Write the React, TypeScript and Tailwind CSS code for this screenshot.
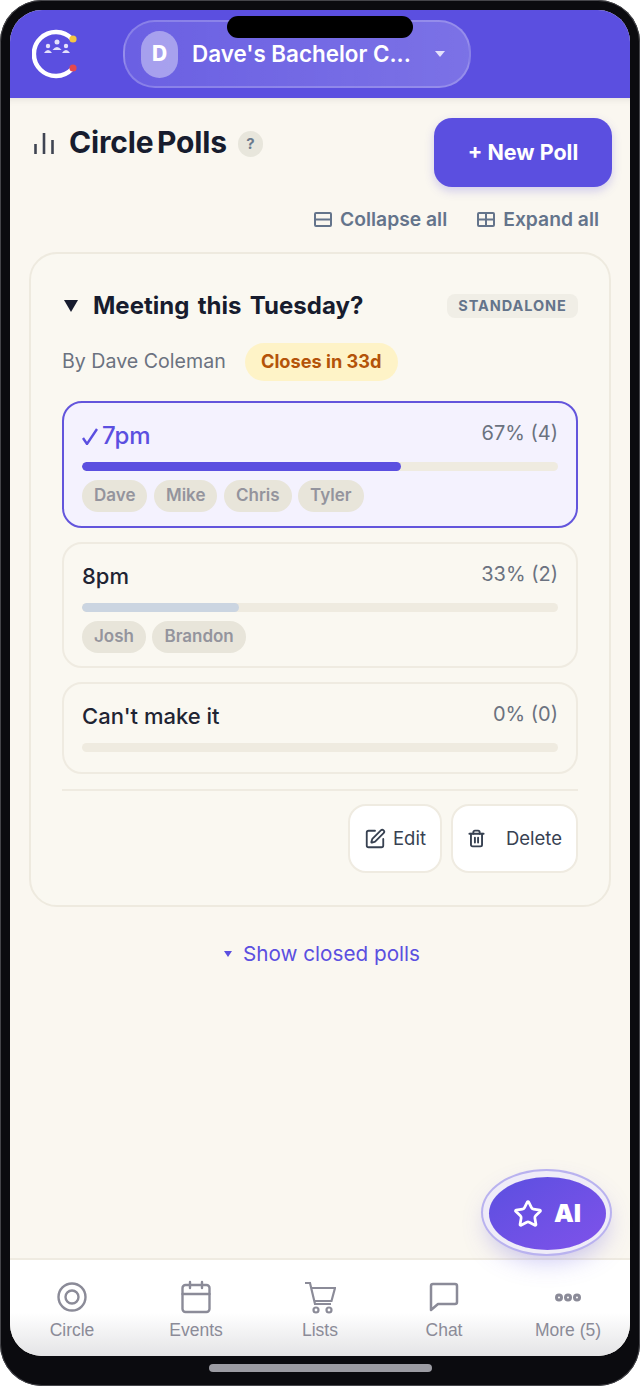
import { Calendar, SquarePen, Star, Trash2 } from 'lucide-react'

const inter = 'font-["Inter",sans-serif]'

function Logo() {
  return (
    <svg width="46" height="50" viewBox="0 0 46 50" className="shrink-0">
      <path d="M40 10 A22 22 0 1 0 40 40" fill="none" stroke="#fff" strokeWidth="4.5" strokeLinecap="round" />
      <circle cx="41" cy="10" r="3.6" fill="#f5c542" />
      <circle cx="41" cy="39" r="3.6" fill="#e5484d" />
      <g fill="#e4e1fb">
        <circle cx="16" cy="17" r="2.2" />
        <path d="M12 24 q4-6 8 0 z" />
        <circle cx="25" cy="13" r="2.500" />
        <path d="M20.500 21 q4.500-6 9 0 z" />
        <circle cx="34" cy="17" r="2.2" />
        <path d="M30 24 q4-6 8 0 z" />
      </g>
    </svg>
  )
}

function Chip({ name }: { name: string }) {
  return (
    <span className="flex h-[32px] items-center rounded-full bg-[#e8e5da] px-[12px] text-[17px] font-semibold text-[#94949d]">
      {name}
    </span>
  )
}

type OptionProps = {
  label: string
  stat: string
  pct: number
  voters?: string[]
  chosen?: boolean
  padBottom: string
}

function Option({ label, stat, pct, voters = [], chosen = false, padBottom }: OptionProps) {
  return (
    <div
      className={`rounded-[20px] border-2 px-[18px] pt-[15px] ${padBottom} ${
        chosen ? 'border-[#6355dc] bg-[#f4f2fe]' : 'border-[#efebe1] bg-[#faf8f1]'
      }`}
    >
      <div className="flex h-[36px] items-start justify-between">
        {chosen ? (
          <span className="flex items-center gap-[4px] text-[24px] leading-[36px] font-medium text-[#5b4fe0]">
            <svg width="16" height="17" viewBox="0 0 16 17" fill="none" stroke="#5b4fe0" strokeWidth="2.4">
              <path d="M1 10 L5 16 L15 1" />
            </svg>
            {label}
          </span>
        ) : (
          <span className="text-[22px] leading-[34px] font-medium text-[#1f2433]">{label}</span>
        )}
        <span className="text-[20px] leading-[30px] text-[#6b7280]">{stat}</span>
      </div>
      <div className="mt-[8px] h-[9px] overflow-hidden rounded-full bg-[#efebe0]">
        <div
          className={chosen ? 'h-full rounded-full bg-[#5b4fe0]' : 'h-full rounded-full bg-[#cbd5e1]'}
          style={{ width: `${pct}%` }}
        />
      </div>
      {voters.length > 0 && (
        <div className="mt-[9px] flex gap-[6.5px]">
          {voters.map((v) => (
            <Chip key={v} name={v} />
          ))}
        </div>
      )}
    </div>
  )
}

function NavItem({ icon, label }: { icon: React.ReactNode; label: string }) {
  return (
    <div className="flex flex-col items-center">
      <div className="flex h-[40px] w-[40px] items-center justify-center">{icon}</div>
      <span className='mt-[2px] font-["Liberation_Sans",sans-serif] text-[17.5px] leading-[22px] text-[#8b8b98]'>{label}</span>
    </div>
  )
}

export default function App() {
  return (
    <div className={`h-[1386px] w-[640px] overflow-hidden bg-white ${inter}`}>
      <div className="relative flex h-full flex-col rounded-[42px] bg-[#0b0b0f] px-[10px] pt-[10px] shadow-[inset_0_0_0_1px_#45454a]">
        {/* notch */}
        <div className="absolute top-[16px] left-[227px] z-20 h-[22px] w-[186px] rounded-full bg-black" />

        <div className="flex h-[1346px] flex-col overflow-hidden rounded-[32px] bg-[#faf7f0]">
          {/* header */}
          <header className="flex h-[88px] shrink-0 items-center bg-[#5b4fe0] pl-[22px]">
            <Logo />
            <div className="ml-[45px] flex h-[68px] w-[348px] items-center rounded-[32px] border-2 border-white/20 bg-gradient-to-r from-white/10 to-white/20 pl-[16px]">
              <div className="flex h-[47px] w-[37px] items-center justify-center rounded-full bg-white/40 text-[21px] font-extrabold text-white">
                D
              </div>
              <span className="ml-[14px] w-[222px] text-[22.4px] font-semibold whitespace-nowrap text-white">
                Dave's Bachelor C...
              </span>
              <svg width="10" height="6" viewBox="0 0 10 6" className="ml-[21px]">
                <path d="M0 0 H10 L5 6 Z" fill="#e4e1fb" />
              </svg>
            </div>
          </header>

          {/* content */}
          <main className="flex min-h-0 flex-1 flex-col px-[19px] shadow-[inset_0_8px_8px_-8px_rgba(0,0,0,0.12)]">
            <div className="flex items-start justify-between pt-[20px]">
              <div className="flex items-center pt-[8px] pl-[4px]">
                <svg width="22" height="22" viewBox="0 0 22 22" fill="none" stroke="#3f4452" strokeWidth="2.6">
                  <path d="M2.5 11 V21 M11 0 V21 M19.500 7 V21" />
                </svg>
                <h1 className="ml-[14px] -translate-y-[2px] text-[30px] leading-[36px] font-bold tracking-[-0.15px] [word-spacing:-3.5px] text-[#171c2e]">
                  Circle Polls
                </h1>
                <span className="ml-[11px] flex h-[26px] w-[25px] items-center justify-center rounded-full bg-[#e8e6dc] text-[15px] font-bold text-[#6b7a8c]">
                  ?
                </span>
              </div>
              <button className="-mr-[1px] h-[69px] w-[178px] rounded-[18px] bg-[#5b4fe0] text-[21.5px] font-bold text-white shadow-[0_4px_10px_rgba(91,79,224,0.25)]">
                + New Poll
              </button>
            </div>

            <div className="mt-[20px] flex justify-end gap-[30px] pr-[12px] text-[19.3px] leading-[24px] font-semibold text-[#64748b]">
              <span className="flex items-center gap-[8px]">
                <svg width="18" height="15" viewBox="0 0 18 15" fill="none" stroke="currentColor" strokeWidth="2">
                  <rect x="1" y="1" width="16" height="13" rx="1" />
                  <path d="M1 7.500 H17" />
                </svg>
                Collapse all
              </span>
              <span className="flex items-center gap-[8px]">
                <svg width="18" height="15" viewBox="0 0 18 15" fill="none" stroke="currentColor" strokeWidth="2">
                  <rect x="1" y="1" width="16" height="13" rx="1" />
                  <path d="M1 7.500 H17 M9 1 V14" />
                </svg>
                Expand all
              </span>
            </div>

            {/* poll card */}
            <section className="mt-[21px] rounded-[28px] border-2 border-[#eeeadf] bg-[#faf8f1] px-[31px] pt-[32px] pb-[32px]">
              <div className="flex items-center justify-between">
                <div className="flex items-center">
                  <svg width="14" height="12" viewBox="0 0 14 12" className="ml-[2px]">
                    <path d="M0 0 H14 L7 12 Z" fill="#171c2e" />
                  </svg>
                  <h2 className="ml-[15px] text-[24px] leading-[40px] font-bold [word-spacing:2.7px] text-[#171c2e]">
                    Meeting this Tuesday?
                  </h2>
                </div>
                <span className="flex h-[24px] w-[131px] items-center justify-center rounded-[8px] bg-[#f0eee6] text-[14.5px] font-bold tracking-[0.9px] text-[#64748b]">
                  STANDALONE
                </span>
              </div>

              <div className="mt-[17px] flex items-center">
                <span className="text-[19.6px] text-[#6b7280]">By Dave Coleman</span>
                <span className="ml-[19px] flex h-[38px] w-[153px] items-center justify-center rounded-full bg-[#fef3c7] text-[18.2px] font-bold text-[#b45309]">
                  Closes in 33d
                </span>
              </div>

              <div className="mt-[20px] flex flex-col gap-[14px]">
                <Option label="7pm" stat="67% (4)" pct={67} voters={['Dave', 'Mike', 'Chris', 'Tyler']} chosen padBottom="pb-[14px]" />
                <Option label="8pm" stat="33% (2)" pct={33} voters={['Josh', 'Brandon']} padBottom="pb-[13px]" />
                <Option label="Can't make it" stat="0% (0)" pct={0} padBottom="pb-[20px]" />
              </div>

              <div className="mt-[15px] flex justify-end gap-[9px] border-t-2 border-[#efebe1] pt-[13px]">
                <button className="flex h-[69px] w-[94px] items-center justify-center gap-[7px] rounded-[18px] border-2 border-[#efebe1] bg-white text-[18.5px] text-[#374151]">
                  <SquarePen size={22} strokeWidth={2} />
                  Edit
                </button>
                <button className="flex h-[69px] w-[127px] items-center justify-center gap-[20px] rounded-[18px] border-2 border-[#efebe1] bg-white text-[18.5px] text-[#374151]">
                  <Trash2 size={19} strokeWidth={2.4} />
                  Delete
                </button>
              </div>
            </section>

            <div className="mt-[32px] flex items-center justify-center gap-[11px] pl-[4px] text-[20.7px] leading-[30px] text-[#5b4fe0]">
              <svg width="8" height="6" viewBox="0 0 8 6">
                <path d="M0 0 H8 L4 6 Z" fill="#5b4fe0" />
              </svg>
              Show closed polls
            </div>
          </main>

          {/* bottom nav */}
          <nav className="grid h-[98px] shrink-0 grid-cols-5 border-t-2 border-[#efebe1] bg-gradient-to-b from-white from-55% to-[#e4e4e6] pt-[17px] text-[#8b8b98]">
            <NavItem
              label="Circle"
              icon={
                <svg width="32" height="32" viewBox="0 0 32 32" fill="none" stroke="currentColor" strokeWidth="2.4">
                  <circle cx="16" cy="16" r="13.500" />
                  <circle cx="16" cy="16" r="6.500" />
                </svg>
              }
            />
            <NavItem label="Events" icon={<Calendar size={36} strokeWidth={1.6} />} />
            <NavItem
              label="Lists"
              icon={
                <svg width="32" height="33" viewBox="0 0 32 33" fill="none" stroke="currentColor" strokeWidth="2.2">
                  <path d="M1 2 H6 L11 23 H27" />
                  <path d="M7.500 7 H31 L27.500 20 H10.500" />
                  <circle cx="12" cy="29" r="2.500" />
                  <circle cx="25" cy="29" r="2.500" />
                </svg>
              }
            />
            <NavItem
              label="Chat"
              icon={
                <svg width="30" height="30" viewBox="0 0 30 30" fill="none" stroke="currentColor" strokeWidth="2.5" strokeLinejoin="round">
                  <path d="M4 2 H26 a2 2 0 0 1 2 2 V20 a2 2 0 0 1 -2 2 H9 L2 28 V4 a2 2 0 0 1 2 -2 Z" />
                </svg>
              }
            />
            <NavItem
              label="More (5)"
              icon={
                <svg width="26" height="9" viewBox="0 0 26 9" fill="none" stroke="currentColor" strokeWidth="3">
                  <circle cx="4" cy="4.500" r="2.500" />
                  <circle cx="13" cy="4.500" r="2.500" />
                  <circle cx="22" cy="4.500" r="2.500" />
                </svg>
              }
            />
          </nav>
        </div>

        <div className="mx-auto mt-[8px] h-[8px] w-[223px] rounded-full bg-[#9c9ca3]" />

        {/* floating AI button */}
        <button className="absolute top-[1177px] left-[489px] z-10 flex h-[73px] w-[117px] items-center justify-center gap-[11px] rounded-[50%] bg-gradient-to-br from-[#5b4fe0] to-[#7f52ea] pr-[1px] text-[25px] font-black text-white shadow-[-1px_-1px_0_5px_#efecf8,-1px_-1px_0_7px_#b9b2ef,0_10px_26px_rgba(91,79,224,0.35)]">
          <Star size={30} strokeWidth={2.2} />
          AI
        </button>
      </div>
    </div>
  )
}
